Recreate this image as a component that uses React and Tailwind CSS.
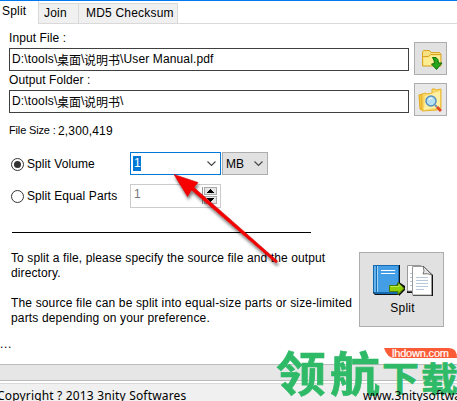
import { useState } from 'react';

const TABS = [
  { id: 'split', label: 'Split', className: 'w-[39px] pl-[2px] pt-[3px] tracking-[0.2px]' },
  { id: 'join', label: 'Join', className: 'w-[40px] pl-[5px] pt-[2px] tracking-[0.2px]' },
  { id: 'md5', label: 'MD5 Checksum', className: 'w-[99px] pl-[7px] pt-[2px] tracking-[0.2px]' },
];

function FolderDownIcon() {
  return (
    <svg width="22" height="22" viewBox="0 0 22 22" className="block">
      <path d="M1.500 17V3l1-1.500h6l1.500 2h8.500l1.500 2V17z" fill="#f9e080" stroke="#d8a422" />
      <path d="M2 7.500h5.500l2-2H20" fill="none" stroke="#d8a422" />
      <path d="M3 9h5l2-2h9v9H3z" fill="#fbed91" />
      <path d="M11.500 8.500h3.500q2.500 1.500 2.500 5.500h3.500L15.500 20.500 10.500 15l3-.5q0-3.500-2-6z" fill="#25a51c" stroke="#11700d" />
    </svg>
  );
}

function FolderSearchIcon() {
  return (
    <svg width="26" height="26" viewBox="0 0 26 26" className="block">
      <path d="M1 8l3-1v16l-2-1z" fill="#f5c842" stroke="#e1a91d" />
      <path d="M4 7l4-1 1 1 5-1V2h3l1 1 5-1v19l-4 2-15 1z" fill="#f8d768" stroke="#e7b52c" />
      <path d="M7 9l15-5v16L6 23z" fill="#fff0a3" />
      <circle cx="13" cy="14" r="5" fill="#b6e1f5" stroke="#548fc0" strokeWidth="1.500" />
      <path d="M11 13q1-2 3-2" fill="none" stroke="#fff" />
      <path d="M17 18l2 2" stroke="#7098b8" strokeWidth="2" />
      <path d="M19 20l4 4" stroke="#de4a24" strokeWidth="3" />
    </svg>
  );
}

function SplitIcon() {
  return (
    <svg width="60" height="32" viewBox="0 0 60 32" className="block">
      <path d="M0 0h27v30H2l-2-2z" fill="#111" />
      <path d="M0 0h26v29H2l-2-2z" fill="#176aae" />
      <path d="M5 1h20v26H5z" fill="#439ee5" />
      <path d="M1 1h2v26H1z" fill="#60b1ec" />
      <path d="M4.500 1v26" stroke="#a0d4f7" />
      <path d="M8 5.500h14M8 8.500h14" stroke="#fff" />
      <path d="M34 1h14l4 4v23H34z" fill="#111" />
      <path d="M34.500.5H48l3 4V26H34.500z" fill="#fff" stroke="#999" />
      <path d="M37 8.500h4M37 12.500h3M37 16.500h3M37 20.500h3" stroke="#b5c4d4" />
      <path d="M40 2h11l9 8v21H40z" fill="#111" />
      <path d="M39.500 1.500H51l7.500 8V30h-19z" fill="#fff" stroke="#999" />
      <path d="M50 1q2 6 0 8 4-1 9 1z" fill="#e5e5e5" stroke="#555" strokeWidth=".8" />
      <path d="M43 12.500h12M43 15.500h12M43 18.500h12M43 21.500h12M43 24.500h8" stroke="#b5c8dc" />
      <path d="M17 27h9v4l6-6v-4l-6-4" fill="#111" />
      <path d="M16.500 20.500H25v-3l6 6-6 6v-3h-8.500z" fill="#91cf05" stroke="#477c00" />
      <path d="M17.500 21.500H26v-2l3 3" fill="none" stroke="#bee94c" />
    </svg>
  );
}

function Chevron() {
  return (
    <svg width="9" height="6" viewBox="0 0 9 6" className="block">
      <path d="M.5.5l4 4 4-4" fill="none" stroke="#444" strokeWidth="1.100" />
    </svg>
  );
}

function Radio({ label, checked, onSelect }) {
  return (
    <button onClick={onSelect} className="flex h-4 items-center gap-[3px] tracking-[0.09px]">
      <span className="flex size-[13px] shrink-0 items-center justify-center rounded-full border border-[#333] bg-white">
        {checked ? <span className="size-[7px] rounded-full bg-[#333]" /> : null}
      </span>
      <span>{label}</span>
    </button>
  );
}

function PathField({ children }) {
  return <div className="flex h-[23px] w-[400px] items-center border border-[#404040] pl-[2px]">{children}</div>;
}

// The Chinese part of a path sits a little lower than the Latin part.
function Path({ file }) {
  return (
    <span className="flex items-center">
      <span className="w-[45px] tracking-[0.15px]">D:\tools\</span>
      <span className="w-[24px] font-['Noto_Sans_CJK_SC',sans-serif]">桌面</span>
      <span className="w-[3px]">\</span>
      <span className="w-[36px] font-['Noto_Sans_CJK_SC',sans-serif]">说明书</span>
      <span className="tracking-[0.13px]">\{file}</span>
    </span>
  );
}

function Pointer() {
  return (
    <svg width="120" height="110" viewBox="0 0 120 110" className="pointer-events-none absolute left-[166px] top-[166px] z-20">
      <defs>
        <filter id="shade" x="-20%" y="-20%" width="140%" height="140%">
          <feDropShadow dx="1" dy="3" stdDeviation="1.800" floodColor="#000" floodOpacity=".5" />
        </filter>
      </defs>
      <path
        d="M8 8.500l24 8-4 5 83.500 73.500-1.500 2L25.500 24l-4 6.500z"
        fill="#f70505"
        stroke="#c80c0c"
        strokeWidth=".6"
        filter="url(#shade)"
      />
    </svg>
  );
}

function Watermark() {
  return (
    <svg width="187" height="56" viewBox="0 0 187 56" className="pointer-events-none absolute left-[270px] top-[345px]">
      <g fill="#2fba68" stroke="#2fba68" strokeWidth=".7" className="font-['Noto_Sans_CJK_SC',sans-serif] font-bold">
        <text transform="translate(6 45.500) scale(1 .94)" fontSize="50">领</text>
        <text transform="translate(60 45.500) scale(1 .94)" fontSize="50">航</text>
        <text transform="translate(112 46) scale(1 .92)" fontSize="37">下</text>
        <text transform="translate(151 46.500) scale(1 .92)" fontSize="37">载</text>
      </g>
      <path d="M114 3h65q8 0 8 10h-62q-8 0-11-10z" fill="#fb5c37" />
      <text x="122" y="11.500" fontSize="11" fill="#fff" stroke="#fff" strokeWidth=".2" textLength="57" className="font-['Liberation_Sans',sans-serif]">
        lhdown.com
      </text>
    </svg>
  );
}

export default function App() {
  const [tab, setTab] = useState('split');
  const [mode, setMode] = useState('volume');

  return (
    <div className="relative flex h-[401px] w-[457px] flex-col overflow-hidden whitespace-nowrap bg-white font-['Liberation_Sans',Arial,sans-serif] text-[12px] leading-[15px] text-black">
      <div className="flex h-[24px] shrink-0 items-end border-t border-[#0078f0]">
        {TABS.map((t) => (
          <button
            key={t.id}
            onClick={() => setTab(t.id)}
            className={`flex items-start border-r border-[#d9d9d9] text-left ${t.className} ${
              tab === t.id ? 'h-[23px]' : 'h-[21px] border-y bg-[#f0f0f0]'
            }`}
          >
            {t.label}
          </button>
        ))}
        <div className="h-px flex-1 bg-[#d9d9d9]" />
      </div>

      <div className="flex h-[116px] shrink-0 justify-between pl-[9px] pr-[10px]">
        <div className="flex flex-col">
          <div className="mt-[7px] h-[17px] tracking-[0.1px]">Input File :</div>
          <PathField><Path file="User Manual.pdf" /></PathField>
          <div className="mt-[2px] h-[17px] tracking-[0.1px]">Output Folder :</div>
          <PathField><Path file="" /></PathField>
          <div className="mt-[9px] flex">
            <span className="w-[49px] pt-px text-[11px] tracking-[-0.15px]">File Size :</span>
            <span className="pt-[2px] tracking-[0.15px]">2,300,419</span>
          </div>
        </div>
        <div className="flex flex-col gap-[8px] pt-[18px]">
          <button className="flex size-[33px] items-center justify-center border border-[#adadad] bg-[#e1e1e1] pl-[3px] pt-[2px]">
            <FolderDownIcon />
          </button>
          <button className="flex size-[33px] items-center justify-center border border-[#adadad] bg-[#e8e8e8]">
            <FolderSearchIcon />
          </button>
        </div>
      </div>

      <div className="flex h-[92px] shrink-0 pl-[11px]">
        <div className="flex w-[119px] flex-col gap-4 pt-[16px]">
          <Radio label="Split Volume" checked={mode === 'volume'} onSelect={() => setMode('volume')} />
          <Radio label="Split Equal Parts" checked={mode === 'parts'} onSelect={() => setMode('parts')} />
        </div>
        <div className="flex flex-col gap-[9px] pt-[12px]">
          <div className="flex gap-px">
            <div className="flex h-[23px] w-[91px] items-center justify-between border border-[#0078d7] pl-[2px] pr-[4px]">
              <span className="h-[15px] w-[8px] bg-[#0078d7] pl-px text-white">1</span>
              <Chevron />
            </div>
            <div className="flex h-[23px] w-[46px] items-center justify-between border border-[#adadad] bg-[#e1e1e1] pl-[3px] pr-[4px]">
              <span className="pt-px">MB</span>
              <Chevron />
            </div>
          </div>
          <div className="flex h-[24px] w-[91px] items-start justify-between border border-[#ccc] pl-[3px] pr-[3px] pt-[2px]">
            <span className="text-[#777]">1</span>
            <div className="flex flex-col gap-px border-l border-[#999] pl-px">
              {['M5 0h1v1h1v1h1v1h1v1H2V3h1V2h1V1h1z', 'M2 0h7v1H8v1H7v1H6v1H5V3H4V2H3V1H2z'].map((d) => (
                <div key={d} className="flex h-[8px] w-[13px] items-center justify-center border border-[#aaa] bg-[#e5e5e5]">
                  <svg width="11" height="4" viewBox="0 0 11 4" className="block shrink-0"><path d={d} /></svg>
                </div>
              ))}
            </div>
          </div>
        </div>
      </div>

      <div className="ml-[12px] h-px w-[299px] shrink-0 bg-black" />

      <div className="flex h-[131px] shrink-0 justify-between pl-[11px] pr-[13px]">
        <div className="w-[345px] pt-[18px]">
          <p className="tracking-[0.12px]">To split a file, please specify the source file and the output<br />directory.</p>
          <p className="mt-[15px] tracking-[0.155px]">The source file can be split into equal-size parts or size-limited<br />parts depending on your preference.</p>
          <p className="-ml-[11px] mt-[11px] h-[15px] tracking-[0.7px]">...</p>
        </div>
        <button className="mt-[19px] flex h-[75px] w-[85px] shrink-0 flex-col items-center border border-[#adadad] bg-[#e1e1e1] pl-[3px] pt-[12px]">
          <SplitIcon />
          <span className="-ml-px mt-[4px] tracking-[0.2px]">Split</span>
        </button>
      </div>

      <div className="h-[17px] shrink-0 border-y border-[#bcbcbc] bg-[#e6e6e6]" />
      <div className="h-[20px] shrink-0 border-t-2 border-white">
        <div className="flex h-[18px] justify-between overflow-hidden border-t border-[#d9d9d9] bg-[#f0f0f0] pt-[4px] font-['Noto_Sans','Open_Sans',sans-serif] text-[12px]">
          <span className="-ml-[3px] tracking-[0.17px]">Copyright ? 2013 3nity Softwares</span>
          <span className="relative z-10 w-[94px] tracking-[0.1px]">www.3nitysoftware</span>
        </div>
      </div>

      <Watermark />
      <Pointer />
    </div>
  );
}
